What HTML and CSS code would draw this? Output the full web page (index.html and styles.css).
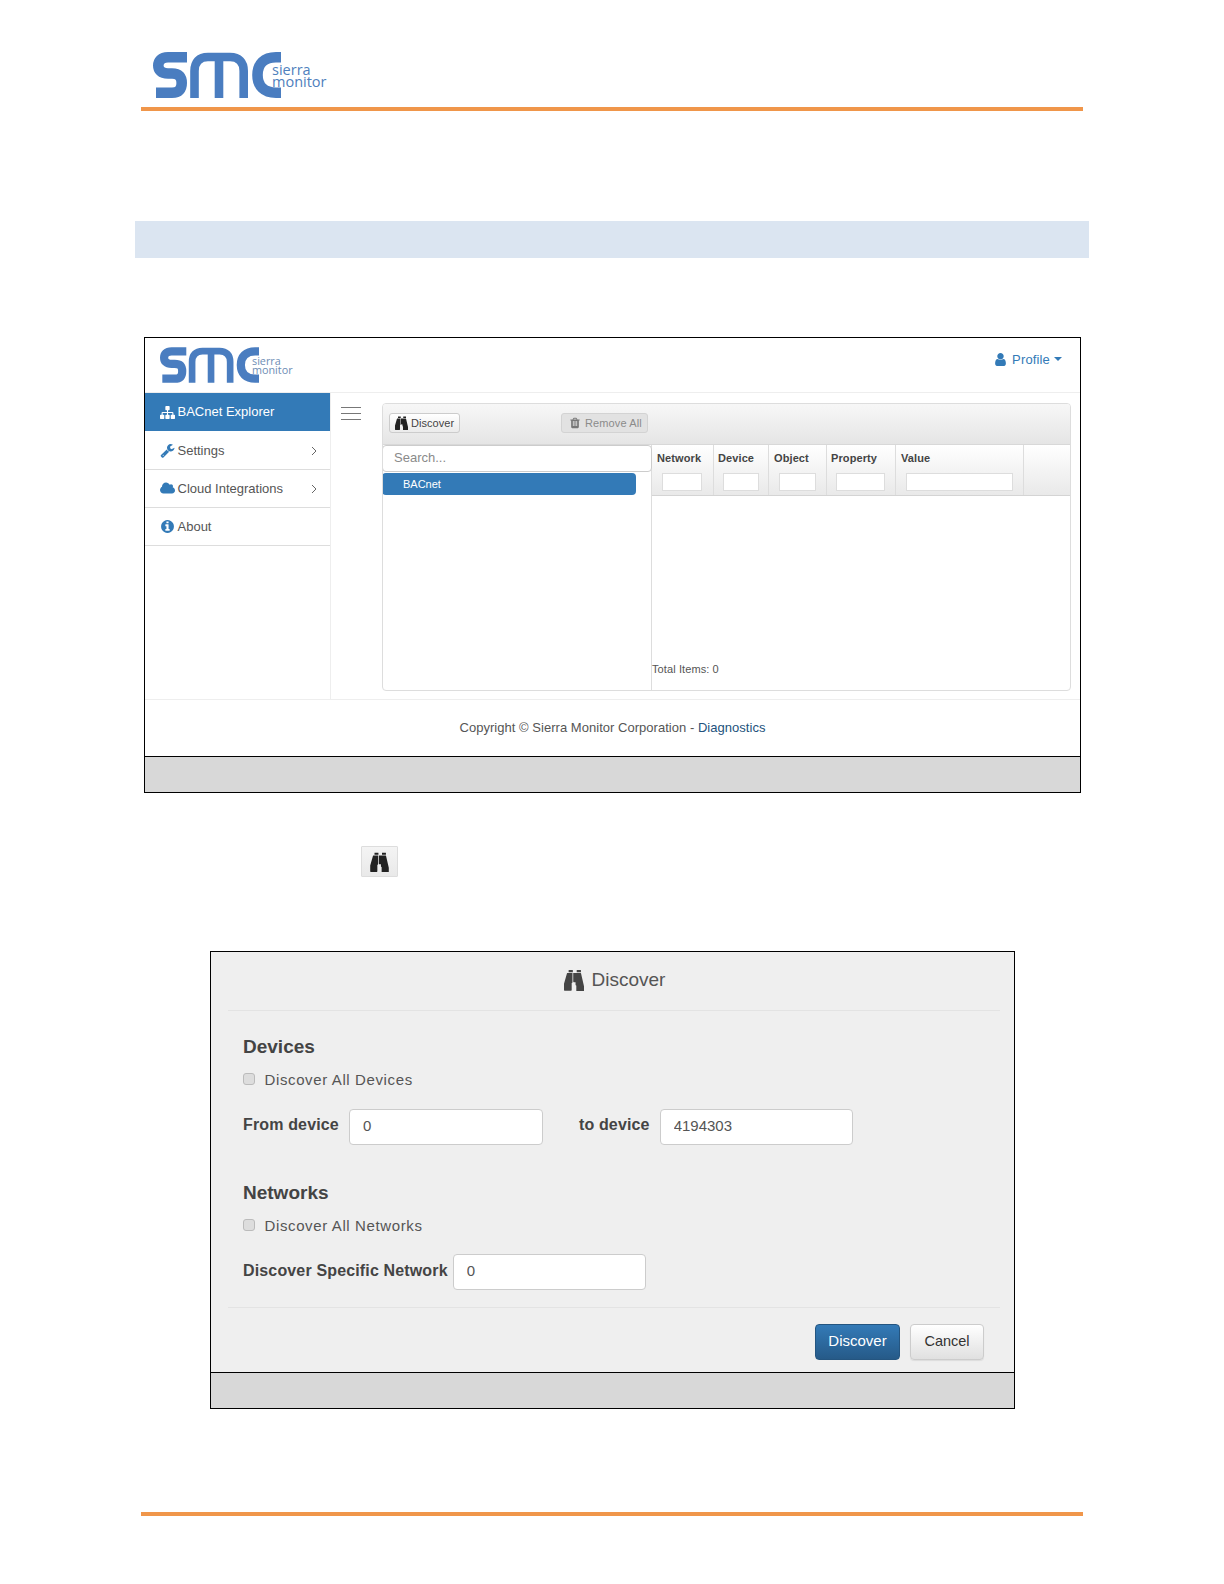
FILE: index.html
```html
<!DOCTYPE html>
<html lang="en">
<head>
<meta charset="utf-8">
<title>Discover</title>
<link rel="stylesheet" href="styles.css">
</head>
<body>
<svg class="defs" width="0" height="0" aria-hidden="true">
  <symbol id="i-bino" viewBox="0 0 1664 1792"><path d="M704 320v768q0 26-19 45t-45 19v576q0 26-19 45t-45 19H64q-26 0-45-19t-19-45v-512l249-873q7-23 31-23h424zm320 0v704q0 26-19 45t-45 19H832q-26 0-45-19t-19-45V320h256zm640 1088v512q0 26-19 45t-45 19h-512q-26 0-45-19t-19-45v-576q-26 0-45-19t-19-45V320h424q24 0 31 23zM736 96v160H384V96q0-14 9-23t23-9h288q14 0 23 9t9 23zm672 0v160h-352V96q0-14 9-23t23-9h288q14 0 23 9t9 23z"/></symbol>
  <symbol id="i-user" viewBox="0 0 1280 1792"><path d="M1280 1399q0 109-62.5 187t-150.5 78H213q-88 0-150.5-78T0 1399q0-85 8.5-160.5t31.5-152 58.5-131 94-89T327 832q131 128 313 128t313-128q76 0 134.5 34.5t94 89 58.5 131 31.5 152 8.5 160.5zm-256-887q0 159-112.5 271.5T640 896 368.5 783.5 256 512t112.5-271.5T640 128t271.5 112.5T1024 512z"/></symbol>
  <symbol id="i-cloud" viewBox="0 0 1920 1792"><path d="M1920 1152q0 159-112.5 271.5T1536 1536H448q-185 0-316.5-131.5T0 1088q0-130 70-240t188-165q-2-30-2-43 0-212 150-362t362-150q156 0 285.5 87T1240 417q71-62 168-62 106 0 181 75t75 181q0 76-41 138 130 31 213.5 135.5T1920 1152z"/></symbol>
  <symbol id="i-info" viewBox="0 0 1536 1792"><path d="M1024 1376v-160q0-14-9-23t-23-9h-96V672q0-14-9-23t-23-9H544q-14 0-23 9t-9 23v160q0 14 9 23t23 9h96v320h-96q-14 0-23 9t-9 23v160q0 14 9 23t23 9h448q14 0 23-9t9-23zM896 480V320q0-14-9-23t-23-9H672q-14 0-23 9t-9 23v160q0 14 9 23t23 9h192q14 0 23-9t9-23zm640 416q0 209-103 385.5T1153.5 1561 768 1664t-385.5-103T103 1281.5 0 896t103-385.5T382.5 231 768 128t385.5 103T1433 510.5 1536 896z"/></symbol>
  <symbol id="i-wrench" viewBox="0 0 1664 1792"><path d="M384 1472q0-26-19-45t-45-19-45 19-19 45 19 45 45 19 45-19 19-45zm644-420l-682 682q-37 37-90 37-52 0-91-37L59 1626q-38-36-38-90 0-53 38-91l681-681q39 98 114.5 173.5T1028 1052zm634-435q0 39-23 106-47 134-164.5 217.5T1216 1024q-185 0-316.5-131.5T768 576t131.5-316.5T1216 128q58 0 121.5 16.5T1445 191q16 11 16 28t-16 28l-293 169v224l193 107q5-3 79-48.5t135.5-81 70.5-35.5q15 0 23.5 10t8.5 25z"/></symbol>
  <symbol id="i-sitemap" viewBox="0 0 1792 1792"><path d="M1792 1248v320q0 40-28 68t-68 28h-320q-40 0-68-28t-28-68v-320q0-40 28-68t68-28h96V960H960v192h96q40 0 68 28t28 68v320q0 40-28 68t-68 28H736q-40 0-68-28t-28-68v-320q0-40 28-68t68-28h96V960H320v192h96q40 0 68 28t28 68v320q0 40-28 68t-68 28H96q-40 0-68-28t-28-68v-320q0-40 28-68t68-28h96V960q0-52 38-90t90-38h512V640h-96q-40 0-68-28t-28-68V224q0-40 28-68t68-28h320q40 0 68 28t28 68v320q0 40-28 68t-68 28h-96v192h512q52 0 90 38t38 90v192h96q40 0 68 28t28 68z"/></symbol>
  <symbol id="i-trash" viewBox="0 0 1408 1792"><path d="M512 1328V624q0-14-9-23t-23-9h-64q-14 0-23 9t-9 23v704q0 14 9 23t23 9h64q14 0 23-9t9-23zm256 0V624q0-14-9-23t-23-9h-64q-14 0-23 9t-9 23v704q0 14 9 23t23 9h64q14 0 23-9t9-23zm256 0V624q0-14-9-23t-23-9h-64q-14 0-23 9t-9 23v704q0 14 9 23t23 9h64q14 0 23-9t9-23zM480 384h448l-48-117q-7-9-17-11H546q-10 2-17 11zm928 32v64q0 14-9 23t-23 9h-96v948q0 83-47 143.5t-113 60.5H288q-66 0-113-58.5T128 1464V512H32q-14 0-23-9t-9-23v-64q0-14 9-23t23-9h309l70-167q15-37 54-63t79-26h320q40 0 79 26t54 63l70 167h309q14 0 23 9t9 23z"/></symbol>
  <symbol id="i-angle" viewBox="0 0 6 10"><path d="M1 1l4 4-4 4" fill="none" stroke="currentColor" stroke-width="1"/></symbol>
  <symbol id="smc-mark" viewBox="0 0 128 46">
    <path class="logo-stroke" d="M34 5.3H15C8 5.3 5.3 9 5.3 13.5S8 21.5 15 21.5H19C26 21.5 28.7 25 28.7 31S26 40.7 19 40.7H3"/>
    <path class="logo-stroke logo-m" d="M41.5 46V19C41.5 10 46 5 55 5H77C86 5 90.7 10 90.7 19V46M66 46V5"/>
    <path class="logo-stroke" d="M128 5.3H123C111 5.3 104.5 12 104.5 23S111 40.7 123 40.7H128"/>
  </symbol>
</svg>

<div class="page">
  <header class="doc-head">
    <div class="logo logo-big">
      <svg class="logo-mark"><use href="#smc-mark"/></svg>
      <div class="logo-words">sierra<br>monitor</div>
    </div>
  </header>
  <div class="band"></div>

  <section class="frame shot-main">
    <div class="app-head">
      <div class="logo logo-small">
        <svg class="logo-mark"><use href="#smc-mark"/></svg>
        <div class="logo-words">sierra<br>monitor</div>
      </div>
      <a class="profile"><svg class="ic ic-user"><use href="#i-user"/></svg><span>Profile</span><i class="caret"></i></a>
    </div>
    <div class="app-body">
      <nav class="side">
        <div class="nav-row active"><svg class="ic nav-ic"><use href="#i-sitemap"/></svg><span>BACnet Explorer</span></div>
        <div class="nav-row"><svg class="ic nav-ic"><use href="#i-wrench"/></svg><span>Settings</span><svg class="angle"><use href="#i-angle"/></svg></div>
        <div class="nav-row"><svg class="ic nav-ic"><use href="#i-cloud"/></svg><span>Cloud Integrations</span><svg class="angle"><use href="#i-angle"/></svg></div>
        <div class="nav-row"><svg class="ic nav-ic"><use href="#i-info"/></svg><span>About</span></div>
      </nav>
      <div class="content">
        <div class="burger"><b></b><b></b><b></b></div>
        <div class="panel">
          <div class="toolbar">
            <button class="tool"><svg class="ic ic-tool"><use href="#i-bino"/></svg>Discover</button>
            <button class="tool tool-off"><svg class="ic ic-trash"><use href="#i-trash"/></svg>Remove All</button>
          </div>
          <div class="panes">
            <div class="tree">
              <input class="search" placeholder="Search...">
              <div class="pill">BACnet</div>
            </div>
            <div class="grid-wrap">
              <div class="cols">
                <div class="col"><span>Network</span><input class="filter f1"></div>
                <div class="col"><span>Device</span><input class="filter f2"></div>
                <div class="col"><span>Object</span><input class="filter f3"></div>
                <div class="col"><span>Property</span><input class="filter f4"></div>
                <div class="col"><span>Value</span><input class="filter f5"></div>
                <div class="col col-end"></div>
              </div>
              <div class="grid-body"></div>
              <div class="total">Total Items: 0</div>
            </div>
          </div>
        </div>
      </div>
    </div>
    <footer class="app-foot">Copyright © Sierra Monitor Corporation -&nbsp;<a class="diag">Diagnostics</a></footer>
    <div class="strip"></div>
  </section>

  <button class="bino-btn"><svg class="ic ic-bino-big"><use href="#i-bino"/></svg></button>

  <section class="frame shot-dialog">
    <div class="dlg-title"><svg class="ic ic-title"><use href="#i-bino"/></svg><span>Discover</span></div>
    <div class="dlg-body">
      <h4 class="dlg-h first">Devices</h4>
      <label class="check"><input type="checkbox"><span>Discover All Devices</span></label>
      <div class="field field-a">
        <label class="fl">From device</label><input class="txt txt-from" value="0">
        <label class="fl fl-to">to device</label><input class="txt txt-to" value="4194303">
      </div>
      <h4 class="dlg-h second">Networks</h4>
      <label class="check"><input type="checkbox"><span>Discover All Networks</span></label>
      <div class="field field-b">
        <label class="fl">Discover Specific Network</label><input class="txt txt-net" value="0">
      </div>
    </div>
    <div class="dlg-foot">
      <button class="btn btn-primary">Discover</button>
      <button class="btn btn-default">Cancel</button>
    </div>
    <div class="strip strip-dlg"></div>
  </section>

  <div class="doc-foot"></div>
</div>
</body>
</html>
```
FILE: styles.css
```css
* { box-sizing: border-box; }
html, body { margin: 0; padding: 0; background: #fff; }
body { font-family: "Liberation Sans", Arial, sans-serif; color: #555; }
input, button { font-family: inherit; margin: 0; }
.defs { display: block; height: 0; }
.page { width: 1224px; height: 1584px; padding-top: 52px; display: flex; flex-direction: column; align-items: flex-start; overflow: hidden; }

.logo { display: flex; align-items: flex-start; }
.logo-stroke { fill: none; stroke: #4a7dc0; stroke-width: 10.6; }
.logo-m { stroke-width: 8.6; }
.logo-mark { display: block; flex: none; }
.logo-words { font-family: "Open Sans", "Noto Sans", sans-serif; color: #4f80bd; }
.logo-big .logo-mark { width: 128px; height: 46px; }
.logo-big .logo-words { margin-left: -9px; padding-top: 12px; font-size: 14.5px; line-height: 12px; font-weight: 500; }
.logo-small .logo-mark { width: 99px; height: 36px; }
.logo-small .logo-words { margin-left: -7px; padding-top: 9px; font-size: 10.8px; line-height: 9.4px; color: #6d8db5; }
.ic { display: block; fill: currentColor; flex: none; }

.doc-head { margin-left: 141px; width: 942px; height: 59px; padding-left: 12px; border-bottom: 4px solid #f0964a; }
.band { margin: 110px 0 0 135px; width: 954px; height: 37px; background: #dbe5f1; }

.frame { border: 1px solid #000; background: #fff; display: flex; flex-direction: column; }
.shot-main { margin: 79px 0 0 144px; width: 937px; height: 456px; }
.app-head { height: 55px; flex: none; border-bottom: 1px solid #eee; display: flex; align-items: flex-start; justify-content: space-between; padding: 9px 18px 0 15px; }
.profile { display: flex; align-items: center; color: #337ab7; font-size: 13px; letter-spacing: .15px; margin-top: 4px; height: 16px; }
.ic-user { width: 11px; height: 15px; margin-right: 6px; }
.caret { width: 0; height: 0; margin-left: 4px; border-left: 4px solid transparent; border-right: 4px solid transparent; border-top: 4px solid #337ab7; }

.app-body { flex: none; height: 306px; display: flex; }
.side { width: 186px; flex: none; border-right: 1px solid #eee; }
.nav-row { height: 38px; display: flex; align-items: center; padding: 0 13px 0 15px; border-bottom: 1px solid #ddd; font-size: 13px; color: #555; }
.nav-row span { flex: 1; margin-top: -1px; }
.nav-row.active { height: 39px; background: #337ab7; color: #fff; border-bottom-color: #fff; }
.nav-ic { width: 15px; height: 15px; margin-right: 2.5px; color: #337ab7; }
.active .nav-ic { color: #fff; }
.angle { width: 6px; height: 10px; color: #666; flex: none; }

.content { flex: 1; display: flex; padding-top: 10px; }
.burger { width: 51px; flex: none; padding: 4px 0 0 10px; display: flex; flex-direction: column; gap: 5px; align-items: flex-start; }
.burger b { display: block; width: 20px; height: 1px; background: #777; }
.panel { width: 689px; height: 288px; border: 1px solid #ddd; border-radius: 4px; display: flex; flex-direction: column; overflow: hidden; }
.toolbar { height: 41px; flex: none; background: linear-gradient(#f7f7f7, #e5e5e5); padding: 9px 0 0 6px; display: flex; border-bottom: 1px solid #d8d8d8; }
.tool { height: 20px; width: 71px; padding: 0 0 0 5px; display: flex; align-items: center; font-size: 11px; letter-spacing: .05px; color: #444; background: linear-gradient(#fff, #ebebeb); border: 1px solid #ccc; border-radius: 3px; }
.ic-tool { width: 13px; height: 14px; margin-right: 3px; color: #222; }
.tool-off { width: 87px; margin-left: 101px; padding-left: 8px; letter-spacing: .12px; background: #e2e2e2; color: #8b8b8b; border-color: #d3d3d3; }
.ic-trash { width: 10px; height: 12px; margin-right: 5px; color: #777; }

.panes { flex: 1; display: flex; min-height: 0; }
.tree { width: 269px; flex: none; border-right: 1px solid #ddd; }
.search { display: block; width: 270px; height: 27px; margin-left: -1px; padding: 0 11px 3px; font-size: 13px; background: #fff; border: 1px solid #ccc; border-radius: 4px; }
.search::placeholder { color: #8a8a8a; opacity: 1; }
.pill { width: 254px; height: 22px; margin: 1px 0 0 -1px; padding-left: 21px; line-height: 22px; font-size: 11px; color: #fff; background: #337ab7; border-radius: 4px; }
.grid-wrap { flex: 1; display: flex; flex-direction: column; min-width: 0; }
.cols { display: flex; height: 51px; flex: none; background: linear-gradient(#fff, #e9e9e9); border-bottom: 1px solid #d4d4d4; }
.col { width: 62px; flex: none; display: flex; flex-direction: column; align-items: flex-start; padding: 7px 0 0 5px; border-right: 1px solid #ddd; font-size: 11px; font-weight: 700; letter-spacing: .1px; color: #444; }
.col:nth-child(2) { width: 55px; padding-left: 4px; }
.col:nth-child(3) { width: 58px; }
.col:nth-child(4) { width: 69px; padding-left: 4px; }
.col:nth-child(5) { width: 128px; }
.col-end { flex: 1; border-right: 0; }
.filter { display: block; height: 18px; margin: 9px 0 0 5px; border: 1px solid #ddd; background: #fff; padding: 0; }
.f1 { width: 40px; }
.f2 { width: 36px; }
.f3 { width: 37px; }
.f4 { width: 49px; }
.f5 { width: 107px; }
.grid-body { flex: 1; }
.total { font-size: 11px; line-height: 14px; padding-bottom: 14px; color: #555; letter-spacing: .1px; }

.app-foot { height: 57px; flex: none; border-top: 1px solid #eee; display: flex; justify-content: center; align-items: center; padding-bottom: 2px; font-size: 13px; letter-spacing: .03px; color: #555; }
.diag { color: #23527c; }
.strip { flex: 1; background: #d8d8d8; border-top: 1px solid #000; }

.bino-btn { margin: 53px 0 0 361px; width: 37px; height: 31px; padding: 0; display: flex; align-items: center; justify-content: center; background: linear-gradient(#f4f4f4, #e9e9e9); border: 1px solid #ddd; border-radius: 1px; }
.ic-bino-big { width: 19px; height: 20px; color: #222; }

.shot-dialog { margin: 74px 0 0 210px; width: 805px; height: 458px; background: #efefef; }
.dlg-title { height: 59px; flex: none; margin: 0 14px 0 17px; padding: 0 0 2px 1px; border-bottom: 1px solid #e3e3e3; display: flex; align-items: center; justify-content: center; gap: 8px; color: #555; font-size: 19px; }
.ic-title { width: 20px; height: 22px; color: #444; }
.dlg-body { flex: none; height: 297px; margin: 0 14px 0 17px; padding: 25px 0 0 15px; border-bottom: 1px solid #e3e3e3; }
.dlg-h { margin: 0; font-size: 19px; line-height: 22px; font-weight: 700; color: #444; }
.second { margin-top: 37px; }
.check { display: flex; align-items: center; height: 20px; margin-top: 12px; font-size: 15px; letter-spacing: .62px; color: #555; }
.check span { margin-top: -1px; }
.check input { appearance: none; width: 12px; height: 12px; margin: -2px 9.5px 0 0; background: #ddd; border: 1px solid #bbb; border-radius: 3px; }
.field { display: flex; align-items: center; }
.field-a { margin-top: 19px; height: 36px; }
.field-b { margin-top: 18px; height: 36px; }
.fl { font-size: 16px; font-weight: 700; letter-spacing: .15px; color: #444; margin-top: -5px; }
.field-b .fl { margin-top: -3px; }
.fl-to { margin-left: 36px; }
.txt { height: 100%; padding: 0 13px 3px; font-size: 15px; color: #555; background: #fff; border: 1px solid #ccc; border-radius: 4px; }
.txt-from { width: 194px; margin-left: 10px; }
.txt-to { width: 193px; margin-left: 10px; }
.txt-net { width: 193px; margin-left: 5px; }
.dlg-foot { flex: none; height: 64px; padding: 16px 30px 0 0; display: flex; justify-content: flex-end; gap: 10px; }
.btn { height: 36px; padding: 0 0 2px; font-size: 15px; border-radius: 4px; }
.btn-primary { width: 85px; padding-bottom: 3px; color: #fff; background: linear-gradient(#337ab7, #265a88); border: 1px solid #245580; }
.btn-default { width: 74px; font-size: 14.5px; color: #333; background: linear-gradient(#fff, #e0e0e0); border: 1px solid #ccc; box-shadow: 0 1px 1px rgba(0,0,0,.08); }

.doc-foot { margin: 103px 0 0 141px; width: 942px; height: 4px; background: #f0964a; }
```
